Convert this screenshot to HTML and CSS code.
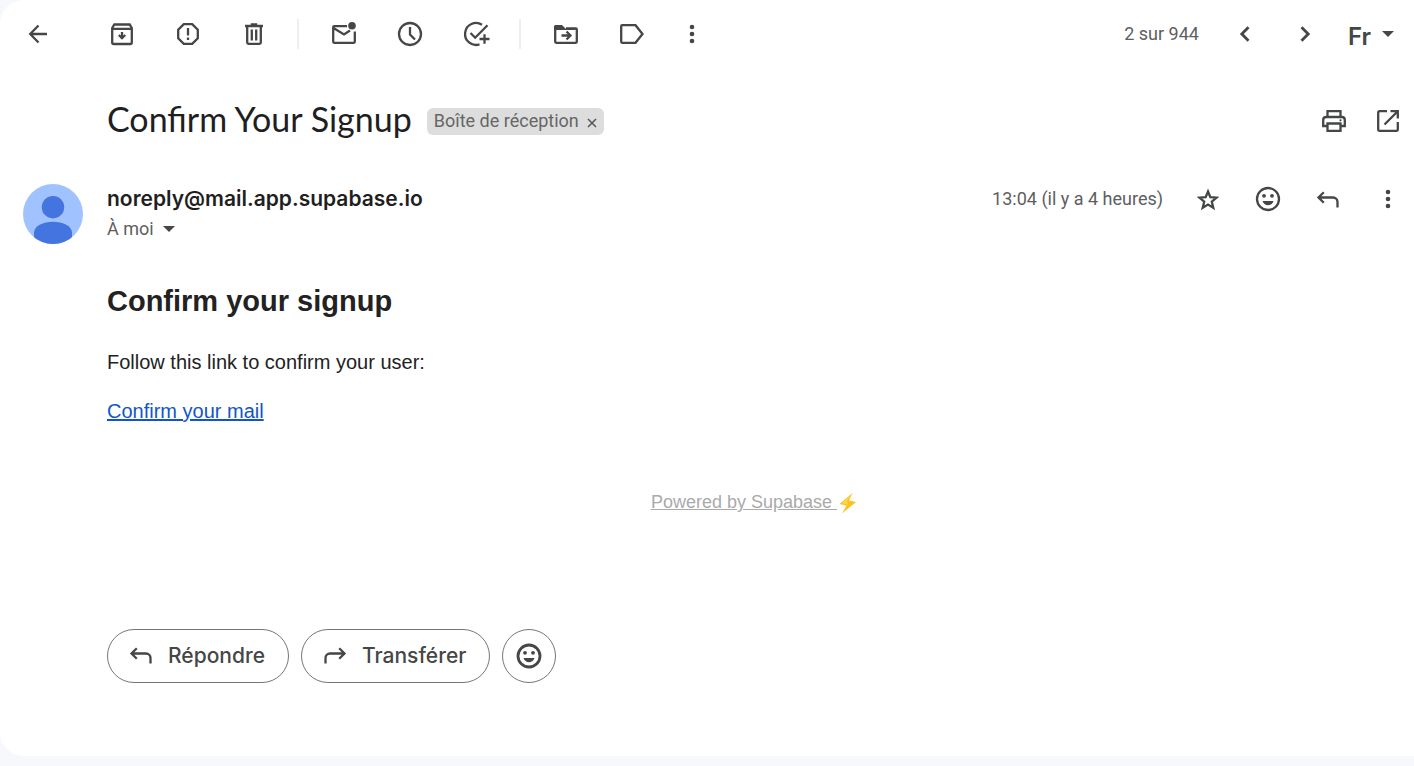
FILE: index.html
```html
<!DOCTYPE html>
<html lang="fr">
<head>
<meta charset="utf-8">
<title>Confirm Your Signup</title>
<meta name="viewport" content="width=device-width, initial-scale=1">
<link rel="stylesheet" href="styles.css">
</head>
<body>
<svg class="sprite" aria-hidden="true">
  <symbol id="i-dots" viewBox="0 0 30 30"><g class="solid"><circle cx="15" cy="8" r="2.300"/><circle cx="15" cy="15" r="2.300"/><circle cx="15" cy="22" r="2.300"/></g></symbol>
  <symbol id="i-smile" viewBox="0 0 30 30"><circle cx="15" cy="15" r="11"/><g class="solid"><circle cx="11" cy="11.800" r="1.900"/><circle cx="19" cy="11.800" r="1.900"/><path d="M9.500 17h11c-.8 2.600-2.800 4.200-5.500 4.200s-4.700-1.600-5.500-4.200z"/></g></symbol>
  <symbol id="i-reply" viewBox="0 0 30 30"><path d="M10.800 8.300 5.500 13.500l5.300 5.200M6 13.500h14a4.500 4.500 0 0 1 4.500 4.500v5.500"/></symbol>
</svg>
<main class="panel">
  <header class="toolbar">
    <button class="icon-btn back" aria-label="Retour"><svg class="icon" viewBox="0 0 30 30"><path d="M15.500 6.500 7.200 15l8.300 8.500M7.500 15H24"/></svg></button>
    <div class="group">
      <button class="icon-btn" aria-label="Archiver"><svg class="icon" viewBox="0 0 30 30"><path d="M5.200 9v14.500q0 1.500 1.500 1.500h16.600q1.500 0 1.500-1.500V9L22.700 5.500H7.300zM5.200 9.800h19.600M15 13v6.500"/><path d="m11.800 16 3.200 3.200 3.200-3.200"/></svg></button>
      <button class="icon-btn" aria-label="Signaler comme spam"><svg class="icon" viewBox="0 0 30 30"><path d="M10.800 5.200h8.400l5.600 5.600v8.400l-5.600 5.600h-8.400l-5.600-5.600v-8.400zM15 9v7.500M15 18.500v2.500"/></svg></button>
      <button class="icon-btn" aria-label="Supprimer"><svg class="icon" viewBox="0 0 30 30"><path d="M6 7h18M11.800 5.500h6.400M8.200 7v16.500q0 1.300 1.300 1.300h11q1.300 0 1.300-1.300V7M12.800 10.500v11M17.200 10.500v11"/></svg></button>
    </div>
    <div class="group">
      <button class="icon-btn" aria-label="Marquer comme non lu"><svg class="icon" viewBox="0 0 30 30"><path d="M18 7.200H5.200q-1 0-1 1v14.600q0 1 1 1h19.600q1 0 1-1V12.500M4.500 9l10.500 6.500 6-4"/><circle class="solid" cx="23" cy="6.800" r="3.800"/></svg></button>
      <button class="icon-btn" aria-label="Mettre en attente"><svg class="icon" viewBox="0 0 30 30"><circle cx="15" cy="15" r="11"/><path d="M15 8v7.500l5 5"/></svg></button>
      <button class="icon-btn" aria-label="Ajouter à Tasks"><svg class="icon" viewBox="0 0 30 30"><path d="M21 5.700A11 11 0 1 0 18.500 25.400M9.500 14l4.700 4.700L26.500 6.300M23.500 15.300v9.500M18.500 20H28.500"/></svg></button>
    </div>
    <div class="group">
      <button class="icon-btn" aria-label="Déplacer vers"><svg class="icon" viewBox="0 0 30 30"><path d="M4.200 7v15.800q0 1 1 1h19.600q1 0 1-1V10.500q0-1-1-1H15"/><path class="solid" d="M3 11V7.500Q3 6 4.500 6H11l4 4h9v1z"/><path d="M10.500 16.500h8M15.500 12.500l4 4-4 4"/></svg></button>
      <button class="icon-btn" aria-label="Libellés"><svg class="icon" viewBox="0 0 30 30"><path d="M5.200 6.200h13.300L25.500 15l-7 8.800H5.200q-1 0-1-1V7.200q0-1 1-1z"/></svg></button>
      <button class="icon-btn narrow" aria-label="Plus"><svg class="icon"><use href="#i-dots"/></svg></button>
    </div>
    <div class="pager">
      <span class="count">2 sur 944</span>
      <button class="icon-btn" aria-label="Plus récent"><svg class="icon chevron" viewBox="0 0 30 30"><path d="m18.500 8.300-6.700 6.700 6.700 6.700"/></svg></button>
      <button class="icon-btn" aria-label="Plus ancien"><svg class="icon chevron" viewBox="0 0 30 30"><path d="m11.500 8.300 6.700 6.700-6.700 6.700"/></svg></button>
      <button class="lang" aria-label="Outils de saisie"><span>Fr</span><svg class="caret" viewBox="0 0 12 6"><path d="M0 0h12L6 6z"/></svg></button>
    </div>
  </header>

  <div class="subject">
    <h1>Confirm Your Signup</h1>
    <span class="chip">Boîte de réception<button aria-label="Retirer le libellé"><svg viewBox="0 0 10 10"><path d="m1 1 8 8M9 1 1 9"/></svg></button></span>
    <div class="actions">
      <button class="icon-btn" aria-label="Imprimer"><svg class="icon" viewBox="0 0 30 30"><path d="M8.500 11V5.200h13V11M8.500 20H4.200v-6q0-3 3-3h15.600q3 0 3 3v6h-4.300M8.500 17.500h13v7.300h-13z"/><circle class="solid" cx="21.500" cy="14.300" r="1.100"/></svg></button>
      <button class="icon-btn" aria-label="Nouvelle fenêtre"><svg class="icon" viewBox="0 0 30 30"><path d="M14 5.200H6.700q-1.500 0-1.500 1.500v16.600q0 1.500 1.500 1.500h16.600q1.500 0 1.500-1.500V16M17.500 5.200h7.300v7.300M24.500 5.500 11.500 18.500"/></svg></button>
    </div>
  </div>

  <article class="message">
    <svg class="avatar" viewBox="0 0 60 60" role="img" aria-label="Photo de profil">
      <clipPath id="disc"><circle cx="30" cy="30" r="30"/></clipPath>
      <g clip-path="url(#disc)"><path fill="#a0c3ff" d="M0 0h60v60H0z"/><circle cx="30" cy="23.200" r="11.200" fill="#4374e0"/><path fill="#4374e0" d="M11 60V49c0-7 9-11.200 19-11.200S49 42 49 49v11z"/></g>
    </svg>
    <div class="content">
      <div class="meta">
        <div class="sender">
          <strong>noreply@mail.app.supabase.io</strong>
          <button class="to">À moi<svg class="caret" viewBox="0 0 12 6"><path d="M0 0h12L6 6z"/></svg></button>
        </div>
        <time>13:04 (il y a 4 heures)</time>
        <div class="actions">
          <button class="icon-btn" aria-label="Suivre"><svg class="icon" viewBox="0 0 30 30"><path d="m15 7.500 2.300 5.700 6.200.5-4.700 4 1.500 6-5.300-3.200-5.300 3.200 1.500-6-4.700-4 6.200-.5z"/></svg></button>
          <button class="icon-btn" aria-label="Ajouter une réaction"><svg class="icon"><use href="#i-smile"/></svg></button>
          <button class="icon-btn" aria-label="Répondre"><svg class="icon"><use href="#i-reply"/></svg></button>
          <button class="icon-btn" aria-label="Plus"><svg class="icon"><use href="#i-dots"/></svg></button>
        </div>
      </div>
      <div class="body">
        <h2>Confirm your signup</h2>
        <p>Follow this link to confirm your user:</p>
        <p><a href="#">Confirm your mail</a></p>
        <a class="powered" href="#"><span>Powered by Supabase&nbsp;</span><svg viewBox="0 0 22 22"><path fill="#fbc11e" d="M15.500 1 2.500 12l7 1.500L5 21.500 19 10l-7-1.500z"/><path fill="#ffd84a" d="M14.500 2.500 5 11.200l6 1.300L10 9z"/></svg></a>
      </div>
      <footer class="replies">
        <button class="pill"><svg class="icon"><use href="#i-reply"/></svg>Répondre</button>
        <button class="pill"><svg class="icon flip"><use href="#i-reply"/></svg>Transférer</button>
        <button class="pill round" aria-label="Ajouter une réaction"><svg class="icon bold"><use href="#i-smile"/></svg></button>
      </footer>
    </div>
  </article>
</main>
</body>
</html>
```
FILE: styles.css
```css
* { box-sizing: border-box; }

body {
  margin: 0;
  min-height: 100vh;
  display: flex;
  flex-direction: column;
  background: #f6f8fc;
  color: #1f1f1f;
  font-family: Inter, "Liberation Sans", sans-serif;
}

button {
  margin: 0;
  padding: 0;
  border: 0;
  background: none;
  color: inherit;
  font: inherit;
  cursor: pointer;
}

h1, h2, p { margin: 0; }

.sprite { position: absolute; width: 0; height: 0; }

.panel {
  flex: 1;
  margin-bottom: 10px;
  background: #fff;
  border-radius: 24px 0 0 24px;
}

.icon {
  display: block;
  width: 30px;
  height: 30px;
  fill: none;
  stroke: #444746;
  stroke-width: 2.3;
}
.icon.bold, .icon.chevron { stroke-width: 2.8; }
.icon.flip { transform: scaleX(-1); }
.solid { fill: #444746; stroke: none; }

.icon-btn {
  width: 60px;
  height: 60px;
  display: flex;
  align-items: center;
  justify-content: center;
}

.toolbar {
  display: flex;
  align-items: center;
  height: 68px;
  padding: 0 2px 0 8px;
}
.back { margin-right: 21px; }
.group { display: flex; align-items: center; }
.group .icon-btn { width: 66px; }
.group .icon-btn.narrow { width: 54px; }
.group + .group::before {
  content: "";
  width: 2px;
  height: 30px;
  margin: 0 12px 0 10px;
  background: #eceff1;
}

.pager {
  display: flex;
  align-items: center;
  margin-left: auto;
}
.count {
  margin-right: 16px;
  color: #5e5e5e;
  font: 18px/24px Roboto, sans-serif;
}
.lang {
  display: flex;
  align-items: center;
  gap: 11px;
  padding: 0 18px 0 13px;
  color: #444746;
  font-size: 24px;
  font-weight: 600;
}
.lang span { padding-top: 4px; }
.caret { width: 12px; height: 6px; fill: #444746; }

.subject {
  display: flex;
  align-items: center;
  padding: 23px 0 0 107px;
}
.subject h1 {
  padding-bottom: 4px;
  font: 400 34px/56px Lato, sans-serif;
}
.chip {
  display: flex;
  align-items: center;
  gap: 8px;
  height: 27px;
  margin-left: 15px;
  padding: 0 7px;
  border-radius: 6px;
  background: #ddd;
  color: #666;
  font: 18px/26px Roboto, sans-serif;
}
.chip svg {
  display: block;
  width: 10px;
  height: 10px;
  margin-top: 3px;
  fill: none;
  stroke: #555;
  stroke-width: 1.5;
}
.actions { display: flex; }
.subject .actions { margin-left: auto; }
.subject .icon-btn { width: 54px; }
.subject .icon-btn:last-child { width: 53px; }

.message {
  display: flex;
  padding: 33px 0 0 23px;
}
.avatar { flex: none; width: 60px; height: 60px; }
.content { flex: 1; padding-left: 24px; }

.meta { display: flex; align-items: flex-start; height: 60px; }
.sender { flex: 1; }
.sender strong {
  display: block;
  font-size: 21px;
  line-height: 30px;
  font-weight: 600;
}
.to {
  display: flex;
  align-items: center;
  gap: 9px;
  color: #5e5e5e;
  font: 18px/30px Roboto, sans-serif;
}
.meta time {
  margin-right: 15px;
  color: #5e5e5e;
  font: 18px/30px Roboto, sans-serif;
}
.meta .icon-btn { height: 30px; }
.meta .icon-btn:last-child { width: 56px; padding-left: 4px; }

.body {
  padding: 40px 11px 0 0;
  color: #222;
  font-family: "Liberation Sans", Arial, sans-serif;
  font-size: 20px;
}
.body h2 { font-size: 29px; line-height: 34px; }
.body p { margin-top: 20px; line-height: 29px; }
.body h2 + p { margin-top: 30px; }
.body a { color: #1155cc; }
.body .powered {
  display: flex;
  justify-content: center;
  margin-top: 63px;
  color: #aaa;
  font-size: 18px;
  line-height: 26px;
  text-decoration: none;
}
.powered span { text-decoration: underline; }
.powered svg { width: 22px; height: 22px; margin-top: 3px; }

.replies {
  display: flex;
  gap: 12px;
  margin: 114px 0 40px;
}
.pill {
  display: flex;
  align-items: center;
  gap: 12px;
  height: 54px;
  padding: 0 23px 2px 18px;
  border: 1px solid #747775;
  border-radius: 27px;
  color: #444746;
  font-size: 21px;
  font-weight: 500;
}
.pill.round { width: 54px; padding: 0; justify-content: center; }
```
